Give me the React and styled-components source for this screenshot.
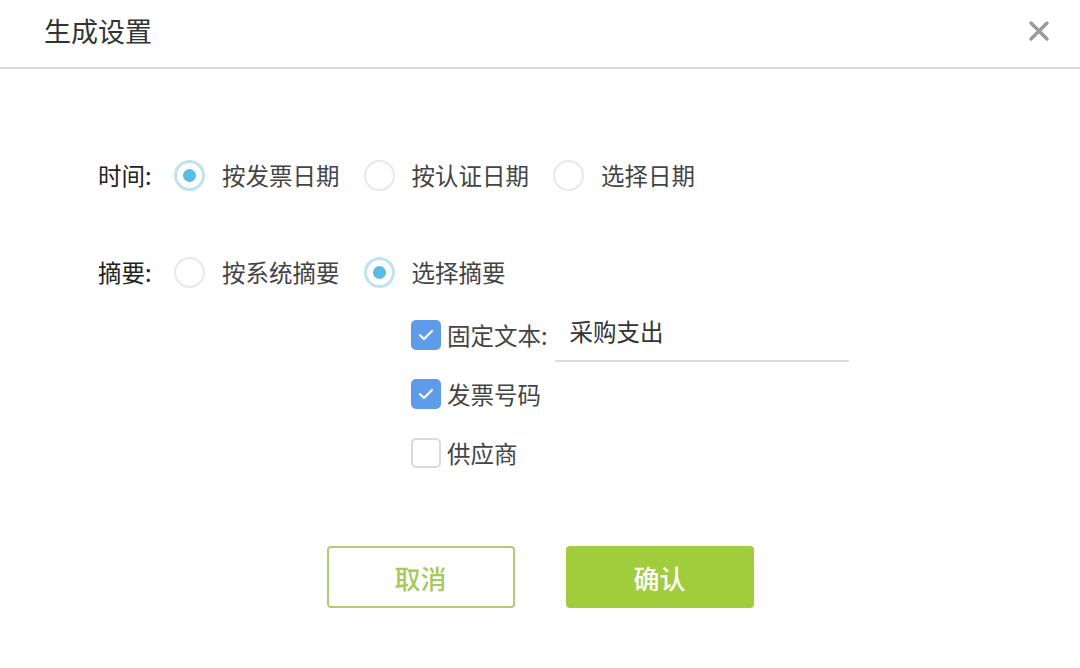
import { useState } from 'react';
import styled, { createGlobalStyle } from 'styled-components';

const GlobalStyle = createGlobalStyle`
  html, body {
    margin: 0;
    padding: 0;
    background: #fff;
  }
  body {
    font-family: "Noto Sans CJK SC", "Noto Sans", sans-serif;
  }
`;

const Dialog = styled.div`
  width: 1080px;
  height: 668px;
  background: #fff;
  display: flex;
  flex-direction: column;
`;

const Header = styled.header`
  height: 61px;
  display: flex;
  align-items: center;
  justify-content: space-between;
  padding: 0 28px 6px 44px;
  border-bottom: 2px solid #dcdcdc;
  box-sizing: content-box;
`;

const Title = styled.h2`
  margin: 0;
  font-size: 27px;
  font-weight: 400;
  color: #333;
`;

const CloseButton = styled.button`
  width: 26px;
  height: 26px;
  padding: 0;
  border: none;
  background: none;
  display: flex;
  align-items: center;
  justify-content: center;
  cursor: pointer;
`;

const Body = styled.div`
  padding: 86px 0 0 98px;
  display: flex;
  flex-direction: column;
`;

const Row = styled.div`
  height: 40px;
  display: flex;
  align-items: center;
  margin-bottom: ${(p) => p.$gap || 0}px;
`;

const Label = styled.span`
  width: 76px;
  font-size: 23.5px;
  color: #222;
`;

const RadioOption = styled.label`
  display: flex;
  align-items: center;
  margin-right: 24px;
  cursor: pointer;
`;

const RadioCircle = styled.span`
  width: 31px;
  height: 31px;
  border-radius: 50%;
  box-sizing: border-box;
  border: ${(p) => (p.$checked ? '3px solid #bfe3ef' : '2px solid #e8e8e8')};
  display: flex;
  align-items: center;
  justify-content: center;
  margin-right: 17px;
  &::after {
    content: '';
    width: 13px;
    height: 13px;
    border-radius: 50%;
    background: #58bde0;
    display: ${(p) => (p.$checked ? 'block' : 'none')};
  }
`;

const OptionText = styled.span`
  font-size: 23.5px;
  color: #444;
`;

const SubList = styled.div`
  margin: 23px 0 0 313px;
  display: flex;
  flex-direction: column;
  gap: 19px;
`;

const CheckRow = styled.label`
  height: 40px;
  display: flex;
  align-items: center;
  cursor: pointer;
`;

const CheckBox = styled.span`
  width: 30px;
  height: 30px;
  box-sizing: border-box;
  border-radius: 5px;
  border: 2px solid ${(p) => (p.$checked ? '#5e9ce9' : '#dadada')};
  background: ${(p) => (p.$checked ? '#5e9ce9' : '#fff')};
  display: flex;
  align-items: center;
  justify-content: center;
  margin-right: 6px;
`;

const TextInput = styled.input`
  margin-left: 7px;
  width: 294px;
  height: 52px;
  margin-top: 2px;
  box-sizing: border-box;
  border: none;
  border-bottom: 2px solid #dcdcdc;
  padding: 0 0 8px 15px;
  font-family: inherit;
  font-size: 23.5px;
  color: #333;
  outline: none;
  background: transparent;
`;

const Footer = styled.div`
  margin-top: 73px;
  display: flex;
  justify-content: center;
  gap: 51px;
`;

const Button = styled.button`
  width: 188px;
  height: 62px;
  box-sizing: border-box;
  border-radius: 4px;
  font-family: inherit;
  font-size: 26px;
  font-weight: 500;
  cursor: pointer;
  border: 2px solid ${(p) => (p.$primary ? '#a1cd3d' : '#b2cc72')};
  background: ${(p) => (p.$primary ? '#a1cd3d' : '#fff')};
  color: ${(p) => (p.$primary ? '#fff' : '#a6c95a')};
`;

const Check = () => (
  <svg width="16" height="12" viewBox="0 0 16 12" fill="none">
    <path d="M2 6.2 L6 10 L14 2" stroke="#fff" strokeWidth="2.2" strokeLinecap="round" strokeLinejoin="round" />
  </svg>
);

const Radio = ({ checked, label, onClick }) => (
  <RadioOption onClick={onClick}>
    <RadioCircle $checked={checked} />
    <OptionText>{label}</OptionText>
  </RadioOption>
);

const App = () => {
  const [dateType, setDateType] = useState('invoice');
  const [summaryType, setSummaryType] = useState('custom');
  const [checks, setChecks] = useState({ fixed: true, number: true, supplier: false });
  const [fixedText, setFixedText] = useState('采购支出');

  const toggle = (key) => () => setChecks((c) => ({ ...c, [key]: !c[key] }));

  return (
    <Dialog>
      <GlobalStyle />
      <Header>
        <Title>生成设置</Title>
        <CloseButton aria-label="关闭">
          <svg width="22" height="22" viewBox="0 0 22 22">
            <path d="M3 3 L19 19 M19 3 L3 19" stroke="#9a9a9a" strokeWidth="3.4" strokeLinecap="round" />
          </svg>
        </CloseButton>
      </Header>
      <Body>
        <Row $gap={57}>
          <Label>时间:</Label>
          <Radio checked={dateType === 'invoice'} label="按发票日期" onClick={() => setDateType('invoice')} />
          <Radio checked={dateType === 'auth'} label="按认证日期" onClick={() => setDateType('auth')} />
          <Radio checked={dateType === 'pick'} label="选择日期" onClick={() => setDateType('pick')} />
        </Row>
        <Row>
          <Label>摘要:</Label>
          <Radio checked={summaryType === 'system'} label="按系统摘要" onClick={() => setSummaryType('system')} />
          <Radio checked={summaryType === 'custom'} label="选择摘要" onClick={() => setSummaryType('custom')} />
        </Row>
        <SubList>
          <CheckRow>
            <CheckBox $checked={checks.fixed} onClick={toggle('fixed')}>{checks.fixed && <Check />}</CheckBox>
            <OptionText>固定文本:</OptionText>
            <TextInput value={fixedText} onChange={(e) => setFixedText(e.target.value)} />
          </CheckRow>
          <CheckRow onClick={toggle('number')}>
            <CheckBox $checked={checks.number}>{checks.number && <Check />}</CheckBox>
            <OptionText>发票号码</OptionText>
          </CheckRow>
          <CheckRow onClick={toggle('supplier')}>
            <CheckBox $checked={checks.supplier}>{checks.supplier && <Check />}</CheckBox>
            <OptionText>供应商</OptionText>
          </CheckRow>
        </SubList>
      </Body>
      <Footer>
        <Button>取消</Button>
        <Button $primary>确认</Button>
      </Footer>
    </Dialog>
  );
};

export default App;
